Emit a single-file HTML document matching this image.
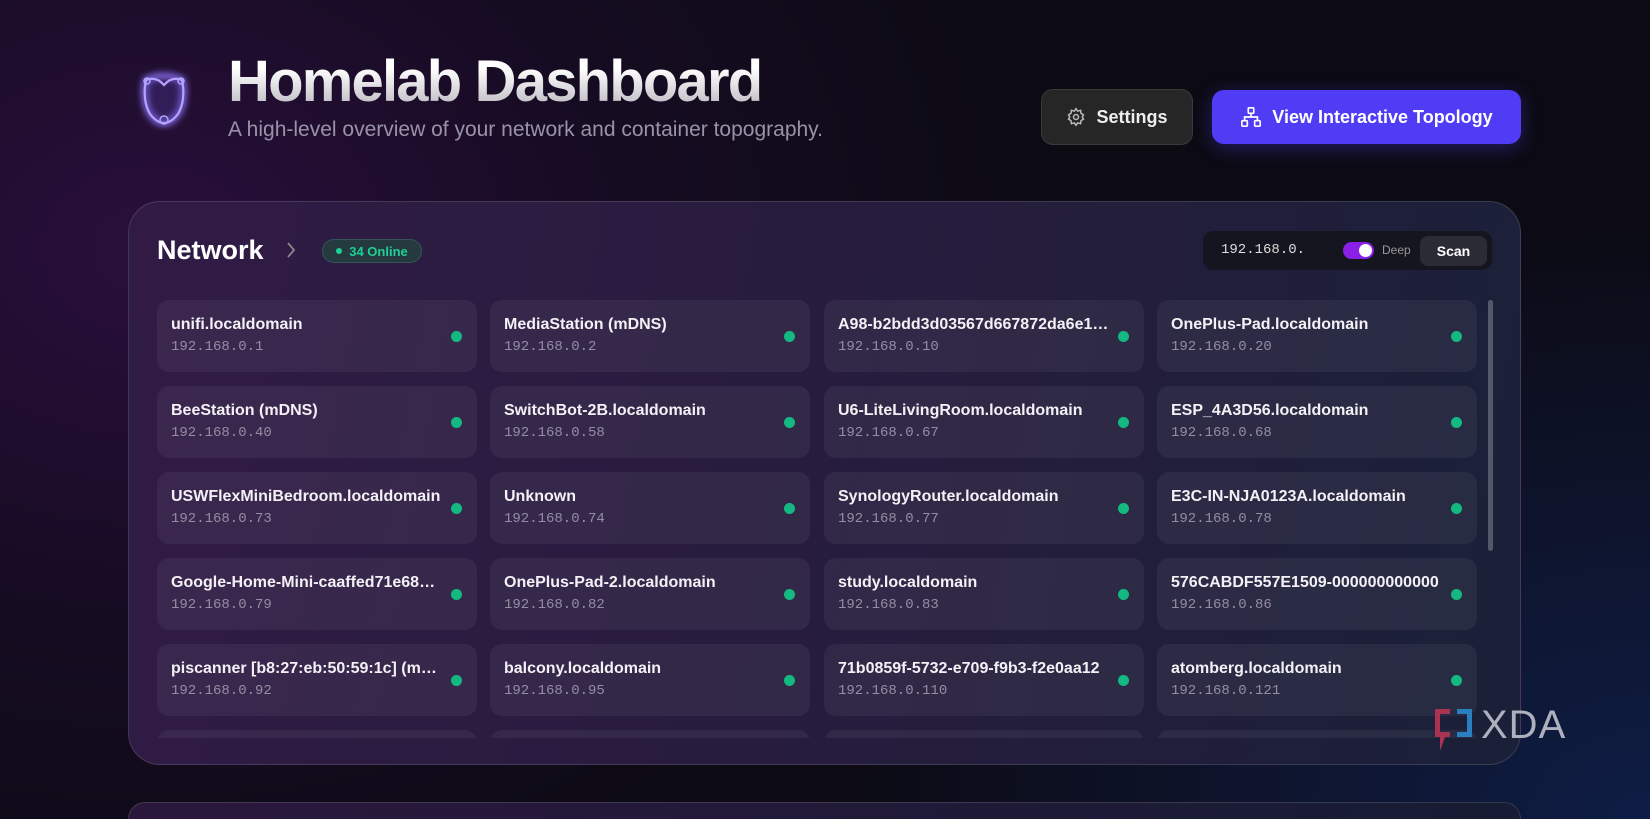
<!DOCTYPE html>
<html style="background:#0c0b14"><head><meta charset="utf-8"><style>
*{box-sizing:border-box;margin:0;padding:0}
html,body{width:1650px;height:819px;overflow:hidden}
body{font-family:"Liberation Sans",sans-serif;color:#fff;background:#0c0b14}
#bg{position:absolute;left:0;top:0;width:1650px;height:819px;overflow:hidden;
background:radial-gradient(ellipse 900px 700px at 150px 250px,#2a0f3c 0%,rgba(30,12,45,0.6) 50%,rgba(12,12,20,0) 100%),radial-gradient(ellipse 800px 600px at 1650px 819px,#0f1d45 0%,rgba(12,20,45,0) 100%),#0c0b14}
.title{position:absolute;left:228px;top:48px;font-size:58px;font-weight:bold;letter-spacing:-1.8px;background:linear-gradient(180deg,#ffffff 30%,#b0adb6);-webkit-background-clip:text;color:transparent}
.sub{position:absolute;left:228px;top:118px;font-size:21px;color:#9a93a8}
.btn{position:absolute;border-radius:12px;display:flex;align-items:center;justify-content:center;font-size:18px;font-weight:bold;gap:10px}
.panel{position:absolute;left:128px;top:201px;width:1393px;height:564px;border-radius:32px;border:1px solid rgba(255,255,255,0.13);background:linear-gradient(100deg,#311b45 0%,#281c3e 45%,#1a2038 100%);overflow:hidden}
.panel2{position:absolute;left:128px;top:802px;width:1393px;height:17px;border-radius:32px 32px 0 0;border:1px solid rgba(255,255,255,0.13);border-bottom:none;background:linear-gradient(100deg,#2b173c,#161c33)}
.card{position:absolute;width:320px;height:72px;border-radius:12px;background:rgba(255,255,255,0.055)}
.card .n{position:absolute;left:14px;top:16px;font-size:16px;font-weight:bold;white-space:nowrap;max-width:272px;overflow:hidden;text-overflow:ellipsis;color:#f3f1f6}
.card .ip{position:absolute;left:14px;top:39px;font-size:14px;font-family:"Liberation Mono",monospace;color:#958da3}
.card .d{position:absolute;right:15px;top:31px;width:11px;height:11px;border-radius:50%;background:#13b981}
</style></head><body><div id="bg">
<svg style="position:absolute;left:134px;top:66px" width="60" height="66" viewBox="-4 -4 60 66">
<defs><filter id="g" x="-50%" y="-50%" width="200%" height="200%"><feGaussianBlur stdDeviation="3.5"/></filter></defs>
<g fill="none" stroke="#8f74ff" stroke-width="6" filter="url(#g)"><path d="M8 10 Q26 2 44 10 Q48 30 40 44 Q33 53 26 53 Q19 53 12 44 Q4 30 8 10Z"/></g>
<g fill="rgba(80,60,160,0.35)" stroke="#b4a4ff" stroke-width="2.2"><path d="M8 10 Q18 6 26 15 Q34 6 44 10 Q48 30 40 44 Q33 53 26 53 Q19 53 12 44 Q4 30 8 10Z"/></g>
<circle cx="9" cy="11" r="3" fill="none" stroke="#b4a4ff" stroke-width="1.5"/><circle cx="43" cy="11" r="3" fill="none" stroke="#b4a4ff" stroke-width="1.5"/><circle cx="26" cy="50" r="4" fill="none" stroke="#b4a4ff" stroke-width="1.5"/>
</svg>
<div class="title">Homelab Dashboard</div>
<div class="sub">A high-level overview of your network and container topography.</div>
<div class="btn" style="left:1041px;top:89px;width:152px;height:56px;background:#262626;border:1px solid #3a3a3a;color:#eee">
<svg width="20" height="20" viewBox="0 0 24 24" fill="none" stroke="#bbb" stroke-width="1.8"><circle cx="12" cy="12" r="3"/><path d="M12 2l2 3 3.5-1 .5 3.5 3 2-1.5 2.5 1.5 2.5-3 2-.5 3.5-3.5-1-2 3-2-3-3.5 1-.5-3.5-3-2L4.5 12 3 9.5l3-2L6.5 4 10 5z"/></svg>Settings</div>
<div class="btn" style="left:1212px;top:90px;width:309px;height:54px;background:#503cf4;box-shadow:0 4px 18px rgba(80,60,244,0.35)">
<svg width="22" height="22" viewBox="0 0 24 24" fill="none" stroke="#fff" stroke-width="1.8"><rect x="9" y="2" width="6" height="6" rx="1"/><rect x="2" y="16" width="6" height="6" rx="1"/><rect x="16" y="16" width="6" height="6" rx="1"/><path d="M12 8v4M5 16v-4h14v4"/></svg>View Interactive Topology</div>
<div class="panel">
<div style="position:absolute;left:28px;top:33px;font-size:27px;font-weight:bold">Network</div>
<svg style="position:absolute;left:156px;top:39px" width="12" height="18" viewBox="0 0 12 18" fill="none" stroke="#888" stroke-width="1.8"><path d="M3 2l6 7-6 7"/></svg>
<div style="position:absolute;left:193px;top:37px;width:100px;height:24px;border-radius:12px;background:#243a3f;border:1px solid #33555a;color:#1fcf95;font-size:13px;font-weight:bold;display:flex;align-items:center;justify-content:center;gap:7px"><span style="width:6px;height:6px;border-radius:50%;background:#1fcf95"></span>34 Online</div>
<div style="position:absolute;left:1074px;top:29px;width:289px;height:39px;border-radius:10px;background:#15151f">
<div style="position:absolute;left:18px;top:11px;font-family:'Liberation Mono',monospace;font-size:14px;color:#ddd">192.168.0.</div>
<div style="position:absolute;left:140px;top:11px;width:31px;height:17px;border-radius:9px;background:#8a1fe8"><div style="position:absolute;right:2px;top:2px;width:13px;height:13px;border-radius:50%;background:#fff"></div></div>
<div style="position:absolute;left:179px;top:12px;font-size:12px;color:#999">Deep</div>
<div style="position:absolute;left:217px;top:5px;width:67px;height:30px;border-radius:8px;background:#2a2b35;font-size:14px;font-weight:bold;display:flex;align-items:center;justify-content:center">Scan</div>
</div>
<div style="position:absolute;left:1359px;top:98px;width:5px;height:251px;border-radius:3px;background:rgba(255,255,255,0.25)"></div>
<div style="position:absolute;left:0;top:0;width:1393px;height:536px;overflow:hidden" id="grid"></div>
</div>
<div class="panel2"></div>
<div style="position:absolute;left:1435px;top:709px;width:152px;height:44px">
<div style="position:absolute;left:0;top:0;width:15px;height:28px;border:5px solid #a83452;border-right:none"></div>
<div style="position:absolute;left:5px;top:28px;width:0;height:0;border-left:5px solid #a83452;border-bottom:14px solid transparent"></div>
<div style="position:absolute;left:22px;top:0;width:15px;height:28px;border:5px solid #2a7fc0;border-left:none"></div>
<div style="position:absolute;left:46px;top:-6px;font-size:40px;color:#aeb0bd;letter-spacing:1px">XDA</div>
</div>
</div>
<script>
var d=[["unifi.localdomain","192.168.0.1"],["MediaStation (mDNS)","192.168.0.2"],["A98-b2bdd3d03567d667872da6e1a2f3","192.168.0.10"],["OnePlus-Pad.localdomain","192.168.0.20"],
["BeeStation (mDNS)","192.168.0.40"],["SwitchBot-2B.localdomain","192.168.0.58"],["U6-LiteLivingRoom.localdomain","192.168.0.67"],["ESP_4A3D56.localdomain","192.168.0.68"],
["USWFlexMiniBedroom.localdomain","192.168.0.73"],["Unknown","192.168.0.74"],["SynologyRouter.localdomain","192.168.0.77"],["E3C-IN-NJA0123A.localdomain","192.168.0.78"],
["Google-Home-Mini-caaffed71e6812ab","192.168.0.79"],["OnePlus-Pad-2.localdomain","192.168.0.82"],["study.localdomain","192.168.0.83"],["576CABDF557E1509-000000000000","192.168.0.86"],
["piscanner [b8:27:eb:50:59:1c] (mDNS)","192.168.0.92"],["balcony.localdomain","192.168.0.95"],["71b0859f-5732-e709-f9b3-f2e0aa12","192.168.0.110"],["atomberg.localdomain","192.168.0.121"],
["",""],["",""],["",""],["",""]];
var h="",xs=[28,361,695,1028];
d.forEach(function(c,i){var x=xs[i%4],y=98+Math.floor(i/4)*86;
h+='<div class="card" style="left:'+x+'px;top:'+y+'px">'+(c[0]?'<div class="n">'+c[0]+'</div><div class="ip">'+c[1]+'</div><div class="d"></div>':'')+'</div>';});
document.getElementById("grid").innerHTML=h;
</script>
</body></html>
